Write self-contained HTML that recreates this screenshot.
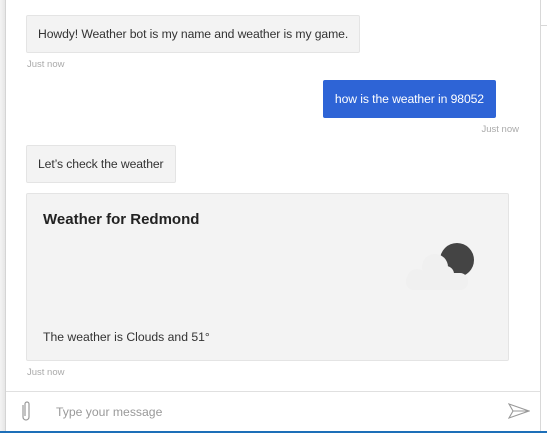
<!DOCTYPE html>
<html><head><style>
*{margin:0;padding:0;box-sizing:border-box}
body{width:547px;height:433px;background:#fff;position:relative;overflow:hidden;font-family:"Liberation Sans",sans-serif;color:#333}
.a{position:absolute}
.b{background:#f3f3f3;border:1px solid #e4e4e4;border-radius:2px;font-size:12.2px;line-height:36px;height:38px;padding:0 11px;white-space:nowrap;letter-spacing:-0.1px}
.t{font-size:9.5px;color:#aaa;white-space:nowrap}
</style></head><body>
<div class="a" style="left:0;top:0;width:5px;height:433px;background:linear-gradient(to right,#f4f4f4,#e6e6e6)"></div>
<div class="a" style="left:5px;top:0;width:1px;height:433px;background:#d4d4d4"></div>
<div class="a" style="left:540px;top:0;width:1px;height:433px;background:#d8d8d8"></div>
<div class="a" style="left:540px;top:25px;width:7px;height:1px;background:#d8d8d8"></div>

<div class="a b" style="left:26px;top:15px">Howdy! Weather bot is my name and weather is my game.</div>
<div class="a t" style="left:27px;top:59px">Just now</div>
<div class="a b" style="right:51px;top:80px;background:#2e64d6;border-color:#2e64d6;color:#fff">how is the weather in 98052</div>
<div class="a t" style="right:28px;top:124px">Just now</div>
<div class="a b" style="left:26px;top:145px">Let’s check the weather</div>
<div class="a" style="left:26px;top:193px;width:483px;height:168px;background:#f3f3f3;border:1px solid #e4e4e4;border-radius:2px">
 <div class="a" style="left:16px;top:17px;font-size:15px;font-weight:bold;color:#222">Weather for Redmond</div>
 <svg class="a" style="left:375px;top:35px" width="80" height="65" viewBox="0 0 80 65">
  <circle cx="55" cy="31" r="17" fill="#444"/>
  <g fill="#f0f0f0">
   <circle cx="33" cy="38" r="13"/><circle cx="44" cy="45" r="8"/><circle cx="15" cy="50" r="10"/>
   <rect x="4" y="44" width="62" height="17" rx="8"/>
  </g>
 </svg>
 <div class="a" style="left:16px;top:136px;font-size:12.2px">The weather is Clouds and 51°</div>
</div>
<div class="a t" style="left:27px;top:367px">Just now</div>
<div class="a" style="left:6px;top:391px;width:534px;height:1px;background:#e0e0e0"></div>
<svg class="a" style="left:19px;top:400px" width="14" height="22" viewBox="0 0 14 22"><path d="M4 5v12a3 3 0 0 0 6 0V4a2 2 0 0 0-4 0v12" fill="none" stroke="#999" stroke-width="1.2"/></svg>
<div class="a" style="left:56px;top:405px;font-size:12.2px;color:#999">Type your message</div>
<svg class="a" style="left:508px;top:403px" width="22" height="16" viewBox="0 0 22 16"><path d="M1 1L21 8L1 15L5 8Z M5 8H21" fill="none" stroke="#999" stroke-width="1.1"/></svg>
<div class="a" style="left:0;top:431px;width:547px;height:2px;background:#1d6fb8"></div>
</body></html>
